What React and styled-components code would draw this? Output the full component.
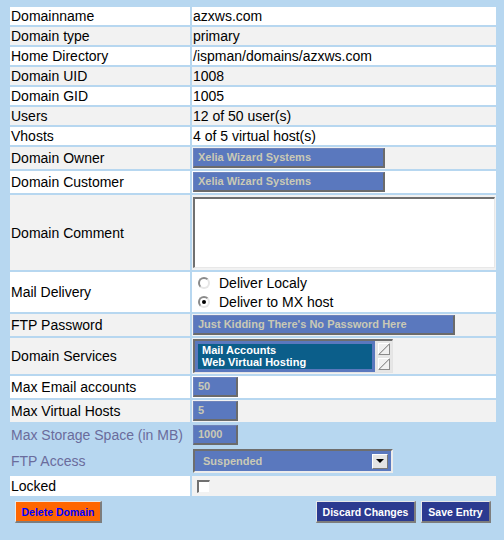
import React from 'react';
import styled, { createGlobalStyle } from 'styled-components';

const Global = createGlobalStyle`
  * { box-sizing: border-box; }
  body {
    margin: 0;
    background: #b7d7f0;
    font-family: "Liberation Sans", Arial, sans-serif;
  }
`;

const Page = styled.div`
  padding: 5px 6px 16px 8px;
  width: 504px;
`;

const Table = styled.table`
  width: 490px;
  border-spacing: 2px;
  border-collapse: separate;
`;

const tones = {
  white: '#ffffff',
  grey: '#f2f2f2',
  none: 'transparent',
};

const Cell = styled.td`
  background: ${({ $tone }) => tones[$tone || 'none']};
  padding: 1px;
  font-size: 14px;
  line-height: 16px;
  color: #000;
  vertical-align: middle;
  white-space: nowrap;
`;

const Label = styled(Cell)`
  width: 180px;
  color: ${({ $muted }) => ($muted ? '#6a6c9c' : '#000')};
`;

const Field = styled.div`
  width: ${({ $w }) => $w}px;
  height: ${({ $h }) => $h || 20}px;
  background: #5a78be;
  border-style: solid;
  border-width: 1px 2px 2px 1px;
  border-color: #6f83b9 #6b6b6b #6b6b6b #6f83b9;
  color: #c9c9b5;
  font-size: 11px;
  font-weight: bold;
  line-height: 17px;
  padding-left: 4px;
  overflow: hidden;
`;

const Comment = styled.div`
  display: block;
  margin: 1px 0 1px;
  width: 100%;
  height: 71px;
  background: #fff;
  border-style: solid;
  border-width: 2px 1px 1px 2px;
  border-color: #707070 #e8e8e8 #e8e8e8 #707070;
`;

const RadioLine = styled.div`
  display: flex;
  align-items: center;
  gap: 9px;
  height: 19px;
  padding-left: 5px;
`;

const Radio = styled.span`
  position: relative;
  width: 12px;
  height: 12px;
  border-radius: 50%;
  border: 2px solid;
  border-color: #8a8a8a #e6e6e6 #e6e6e6 #8a8a8a;
  background: #fff;
  &::after {
    content: '';
    display: ${({ $on }) => ($on ? 'block' : 'none')};
    position: absolute;
    left: 2px;
    top: 2px;
    width: 4px;
    height: 4px;
    border-radius: 50%;
    background: #000;
  }
`;

const ListBox = styled.div`
  display: flex;
  width: 200px;
  height: 34px;
  border-style: solid;
  border-width: 2px 1px 1px 2px;
  border-color: #6e6e6e #e4e4e4 #e4e4e4 #6e6e6e;
  background: #5a78be;
`;

const ListItems = styled.div`
  flex: 1;
  margin: 3px;
  background: #0b5e8a;
  color: #fff;
  font-size: 11px;
  font-weight: bold;
  line-height: 12px;
  padding: 0 0 0 4px;
`;

const ScrollCol = styled.div`
  width: 17px;
  background: #e6e6e6;
  display: flex;
  flex-direction: column;
  justify-content: space-between;
  align-items: center;
  padding: 2px 0;
`;

const ScrollBtn = styled.span`
  width: 12px;
  height: 12px;
  background: #f0f0f0;
  border: 1px solid;
  border-color: #fff #8a8a8a #8a8a8a #fff;
  background-image: linear-gradient(135deg, transparent 46%, #9a9a9a 48%, #9a9a9a 54%, transparent 56%);
`;

const Select = styled.div`
  display: flex;
  align-items: center;
  justify-content: space-between;
  width: 200px;
  height: 24px;
  background: #5a78be;
  border-style: solid;
  border-width: 2px;
  border-color: #6e6e6e #ececec #ececec #6e6e6e;
  color: #c9c9b5;
  font-size: 11px;
  font-weight: bold;
  padding: 0 3px 0 8px;
`;

const Arrow = styled.span`
  width: 16px;
  height: 15px;
  background: #e4e4e4;
  border: 1px solid;
  border-color: #fff #7a7a7a #7a7a7a #fff;
  display: flex;
  align-items: center;
  justify-content: center;
  &::before {
    content: '';
    border-left: 4px solid transparent;
    border-right: 4px solid transparent;
    border-top: 4px solid #000;
  }
`;

const Check = styled.span`
  display: block;
  width: 13px;
  height: 13px;
  margin: 3px 0 2px 4px;
  background: #fff;
  border-style: solid;
  border-width: 2px 1px 1px 2px;
  border-color: #707070 #f2f2f2 #f2f2f2 #707070;
`;

const Actions = styled.div`
  display: flex;
  gap: 5px;
  margin-top: 3px;
  padding: 0 7px;
`;

const Button = styled.button`
  height: 22px;
  padding: 0;
  white-space: nowrap;
  font-family: "Liberation Sans", Arial, sans-serif;
  font-size: 10.5px;
  font-weight: bold;
  background: ${({ $danger }) => ($danger ? '#ff6600' : '#2b3a90')};
  color: ${({ $danger }) => ($danger ? '#0000ff' : '#fff')};
  border-style: solid;
  border-width: 1px 2px 2px 1px;
  border-color: #e8e8e8 #7d7d7d #7d7d7d #e8e8e8;
  margin-right: ${({ $push }) => ($push ? 'auto' : '0')};
  width: ${({ $w }) => $w}px;
`;

const textRows = [
  ['Domainname', 'azxws.com', 'white'],
  ['Domain type', 'primary', 'grey'],
  ['Home Directory', '/ispman/domains/azxws.com', 'white'],
  ['Domain UID', '1008', 'grey'],
  ['Domain GID', '1005', 'white'],
  ['Users', '12 of 50 user(s)', 'grey'],
  ['Vhosts', '4 of 5 virtual host(s)', 'white'],
];

export default function App() {
  return (
    <Page>
      <Global />
      <Table>
        <tbody>
          {textRows.map(([k, v, tone]) => (
            <tr key={k}>
              <Label $tone={tone}>{k}</Label>
              <Cell $tone={tone}>{v}</Cell>
            </tr>
          ))}
          <tr>
            <Label $tone="grey">Domain Owner</Label>
            <Cell $tone="grey"><Field $w={192}>Xelia Wizard Systems</Field></Cell>
          </tr>
          <tr>
            <Label $tone="white">Domain Customer</Label>
            <Cell $tone="white"><Field $w={192}>Xelia Wizard Systems</Field></Cell>
          </tr>
          <tr>
            <Label $tone="grey">Domain Comment</Label>
            <Cell $tone="grey"><Comment /></Cell>
          </tr>
          <tr>
            <Label $tone="white">Mail Delivery</Label>
            <Cell $tone="white">
              <RadioLine><Radio />Deliver Localy</RadioLine>
              <RadioLine><Radio $on />Deliver to MX host</RadioLine>
            </Cell>
          </tr>
          <tr>
            <Label $tone="grey">FTP Password</Label>
            <Cell $tone="grey"><Field $w={262}>Just Kidding There's No Password Here</Field></Cell>
          </tr>
          <tr>
            <Label $tone="grey">Domain Services</Label>
            <Cell $tone="grey">
              <ListBox>
                <ListItems>
                  <div>Mail Accounts</div>
                  <div>Web Virtual Hosting</div>
                </ListItems>
                <ScrollCol>
                  <ScrollBtn />
                  <ScrollBtn />
                </ScrollCol>
              </ListBox>
            </Cell>
          </tr>
          <tr>
            <Label $tone="white">Max Email accounts</Label>
            <Cell $tone="white"><Field $w={45}>50</Field></Cell>
          </tr>
          <tr>
            <Label $tone="grey">Max Virtual Hosts</Label>
            <Cell $tone="grey"><Field $w={45}>5</Field></Cell>
          </tr>
          <tr>
            <Label $muted>Max Storage Space (in MB)</Label>
            <Cell><Field $w={45}>1000</Field></Cell>
          </tr>
          <tr>
            <Label $muted>FTP Access</Label>
            <Cell>
              <Select>
                <span>Suspended</span>
                <Arrow />
              </Select>
            </Cell>
          </tr>
          <tr>
            <Label $tone="white">Locked</Label>
            <Cell $tone="grey"><Check /></Cell>
          </tr>
        </tbody>
      </Table>
      <Actions>
        <Button $danger $push $w={87}>Delete Domain</Button>
        <Button $w={100}>Discard Changes</Button>
        <Button $w={70}>Save Entry</Button>
      </Actions>
    </Page>
  );
}
